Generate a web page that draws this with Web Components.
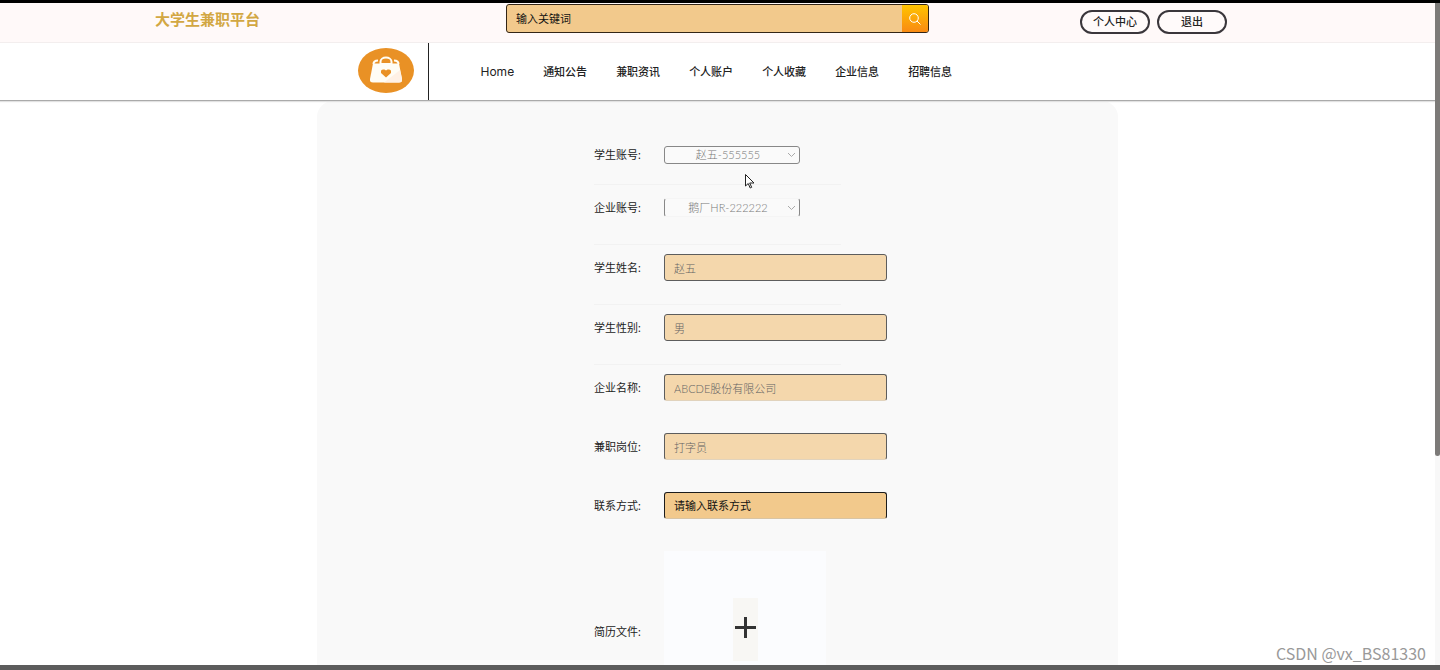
<!DOCTYPE html>
<html lang="zh-CN">
<head>
<meta charset="utf-8">
<title>大学生兼职平台</title>
<style>
html, body { margin: 0; height: 100%; }
body { font-family: Lato, "Noto Sans CJK SC", sans-serif; font-size: 11px; line-height: 16px; color: #222; background: #fff; overflow: hidden; }
</style>
</head>
<body>
<job-app>
  <top-bar slot="header"></top-bar>
  <site-nav slot="header">
    <nav-item latin>Home</nav-item>
    <nav-item>通知公告</nav-item>
    <nav-item>兼职资讯</nav-item>
    <nav-item>个人账户</nav-item>
    <nav-item>个人收藏</nav-item>
    <nav-item>企业信息</nav-item>
    <nav-item>招聘信息</nav-item>
  </site-nav>
  <apply-form>
    <select-row label="学生账号:" value="赵五-555555" compact></select-row>
    <select-row label="企业账号:" value="鹅厂HR-222222" open-edge></select-row>
    <text-row label="学生姓名:" value="赵五" ruled></text-row>
    <text-row label="学生性别:" value="男" ruled></text-row>
    <text-row label="企业名称:" value="ABCDE股份有限公司" open-edge></text-row>
    <text-row label="兼职岗位:" value="打字员" open-edge></text-row>
    <text-row label="联系方式:" placeholder="请输入联系方式" open-edge></text-row>
    <upload-row label="简历文件:"></upload-row>
  </apply-form>
</job-app>

<script>
const define = (name, html, setup) => {
  const template = document.createElement('template');
  template.innerHTML = html;
  customElements.define(name, class extends HTMLElement {
    constructor() {
      super();
      this.attachShadow({ mode: 'open' }).append(template.content.cloneNode(true));
    }
    connectedCallback() {
      if (setup) setup(this, this.shadowRoot);
    }
  });
};

define('job-app', `
<style>
:host { display: flex; flex-direction: column; height: 100vh; box-sizing: border-box; border-top: 3px solid #000; border-bottom: 5px solid #5c5c5c; position: relative; }
.view { flex: 1; min-height: 0; display: grid; grid-template-columns: minmax(0, 1fr) 5px; }
.page { display: flex; flex-direction: column; min-height: 0; overflow: hidden; }
main { flex: 1; min-height: 0; overflow: hidden; }
.track { background: #f8f8f8; }
.thumb { height: 68.5%; background: #7c7a78; border-radius: 0 0 3px 3px; }
.mark { position: absolute; right: 14px; bottom: 0; font: 400 16px/24px "Noto Sans CJK SC", sans-serif; color: #999; }
.cursor { position: absolute; left: 745px; top: 171px; }
</style>
<div class="view">
  <div class="page"><slot name="header"></slot><main><slot></slot></main></div>
  <div class="track"><div class="thumb"></div></div>
</div>
<div class="mark">CSDN @vx_BS81330</div>
<svg class="cursor" width="10" height="15" viewBox="0 0 10 15"><path d="M.5 .5v11.5l2.700-2.500 2 4.500 1.500-.7-2-4.300H9z" fill="#fff" stroke="#222" stroke-width="1"/></svg>
`);

define('top-bar', `
<style>
:host { display: grid; grid-template-columns: 1fr 423px 1fr; align-items: start; height: 39px; border-bottom: 1px solid #f3eeee; background: #fff9f9; }
h1 { margin: 0; padding: 4px 0 0 155px; font-size: 15px; line-height: 24px; font-weight: 700; color: #d2a743; }
form { display: flex; box-sizing: border-box; height: 29px; margin-top: 1px; border: 1px solid #332516; border-radius: 3px; overflow: hidden; background: #f2c98c; }
input { flex: 1; min-width: 0; border: 0; padding: 0 9px; background: none; font: inherit; color: #111; outline: 0; }
input::placeholder { color: #111; opacity: 1; }
.go { width: 26px; border: 0; padding: 0; display: grid; place-items: center; background: linear-gradient(#ffc400, #f98a13); }
.actions { display: flex; justify-content: flex-end; gap: 7px; padding: 7px 208px 0 0; }
.actions button { box-sizing: border-box; width: 70px; height: 24px; padding: 0; border: 2px solid #3a363b; border-radius: 12px; background: #fffafa; font: inherit; font-weight: 500; color: #222; }
</style>
<h1>大学生兼职平台</h1>
<form role="search">
  <input type="text" aria-label="输入关键词" placeholder="输入关键词">
  <button class="go" type="button" aria-label="搜索"><svg width="12" height="12" viewBox="0 0 12 12" fill="none" stroke="#fff" stroke-width="1"><circle cx="5" cy="5" r="4.300"/><path d="M8 8l3.500 3.500"/></svg></button>
</form>
<div class="actions"><button type="button">个人中心</button><button type="button">退出</button></div>
`);

define('site-nav', `
<style>
:host { display: block; border-bottom: 1px solid #aaa; background: #fff; box-shadow: 0 1px 1px #e2e2e2; position: relative; }
.inner { display: flex; max-width: 720px; height: 57px; margin: 0 auto; }
.logo { display: flex; align-items: center; padding: 0 14px 2px 0; border-right: 1px solid #222; }
.logo svg { display: block; }
nav { display: flex; align-items: center; gap: 29px; padding-left: 52px; }
</style>
<div class="inner">
  <a class="logo" href="#" aria-label="首页"><svg width="56" height="45" viewBox="0 0 56 45">
    <ellipse cx="28" cy="22.500" rx="28" ry="22.500" fill="#e99125"/>
    <path d="M15.500 16q0-3.500 4.500-3.500M40.500 16q0-3.500-4.500-3.500" fill="none" stroke="#fffdf5" stroke-width="2"/>
    <path d="M15 15.500h26L44 31q.5 3.500-3 3.500H15q-3.500 0-3-3.500z" fill="#fffdf5"/>
    <path d="M42 22 44 31q.5 3.500-3 3.500H26z" fill="#fff1e5"/>
    <path d="M22.500 16v-2.200a5.500 4.300 0 0 1 11 0V16z" fill="#e99125" stroke="#fffdf5" stroke-width="2"/>
    <path d="M28 29.500l-5-4.500v-2q0-1.500 2-1.500h1.500L28 22.500l1.500-1H31q2 0 2 1.500v2z" fill="#e99125"/>
  </svg></a>
  <nav><slot></slot></nav>
</div>
`);

define('nav-item', `
<style>
:host { display: block; }
a { color: #222; text-decoration: none; font-weight: 500; white-space: nowrap; font-family: Inter, "Noto Sans CJK SC", sans-serif; }
:host([latin]) a { font-size: 12px; font-weight: 400; }
</style>
<a href="#"><slot></slot></a>
`);

define('apply-form', `
<style>
:host { display: block; box-sizing: border-box; max-width: 801px; min-height: 100%; margin: 0 auto; padding: 31px 0 40px; background: #f9f9f9; border-radius: 16px 16px 0 0; }
form { width: 247px; margin: 0 auto; }
</style>
<form><slot></slot></form>
`);

const rowStyle = `
:host { display: grid; grid-template-columns: 50px 136px; column-gap: 20px; align-items: center; grid-auto-rows: minmax(27px, auto); padding: 9px 0 23px; font-weight: 400; }
:host([ruled]) { border-bottom: 1px solid #f2f2f2; }
label { white-space: nowrap; color: #222; }
`;

define('select-row', `
<style>${rowStyle}
:host { border-bottom: 1px solid #f2f2f2; }
:host([compact]) { padding-bottom: 16px; }
.box { display: grid; align-items: center; }
select { grid-area: 1 / 1; appearance: none; box-sizing: border-box; width: 100%; height: 18px; margin: 0; padding: 0 8px 0 0; border: 1px solid #888; border-radius: 3px; background: #fafafa; font: inherit; font-weight: 300; line-height: 16px; color: #777; text-align: center; text-align-last: center; opacity: 1; }
:host([open-edge]) select { height: 19px; border-top-color: #f5f5f5; border-bottom-color: #f5f5f5; }
svg { grid-area: 1 / 1; justify-self: end; margin-right: 4px; pointer-events: none; }
</style>
<label for="control"></label>
<div class="box"><select id="control" disabled><option></option></select>
<svg width="9" height="6" viewBox="0 0 9 6" fill="none" stroke="#aaa"><path d="M1 1l3.500 3.500L8 1"/></svg></div>
`, (host, root) => {
  root.querySelector('label').textContent = host.getAttribute('label');
  root.querySelector('option').textContent = host.getAttribute('value');
});

define('text-row', `
<style>${rowStyle}
input { box-sizing: border-box; width: 223px; height: 27px; margin: 0; padding: 0 9px; border: 1px solid #1c1c1c; border-radius: 3px; background: #f2c98c; font: inherit; color: #111; outline: 0; }
input::placeholder { color: #111; opacity: 1; }
input:disabled { opacity: .7; color: #333; font-weight: 300; -webkit-text-fill-color: #222; }
:host([open-edge]) input { border-bottom-color: #d8c4a4; }
</style>
<label for="control"></label>
<input id="control" type="text">
`, (host, root) => {
  const input = root.querySelector('input');
  root.querySelector('label').textContent = host.getAttribute('label');
  if (host.hasAttribute('value')) {
    input.value = host.getAttribute('value');
    input.disabled = true;
  } else {
    input.placeholder = host.getAttribute('placeholder');
  }
});

define('upload-row', `
<style>${rowStyle}
button { display: grid; place-items: center; width: 162px; height: 162px; margin: 0; padding: 0 0 6px; border: 0; background: #fbfcfe; }
span { display: grid; place-items: center; box-sizing: border-box; width: 25px; height: 63px; padding-bottom: 4px; background: #f8f7f4; }
</style>
<label for="control"></label>
<button id="control" type="button"><span><svg width="21" height="21" viewBox="0 0 21 21" stroke="#333" stroke-width="3"><path d="M0 10.500h21M10.500 0v21"/></svg></span></button>
`, (host, root) => {
  root.querySelector('label').textContent = host.getAttribute('label');
});
</script>
</body>
</html>
